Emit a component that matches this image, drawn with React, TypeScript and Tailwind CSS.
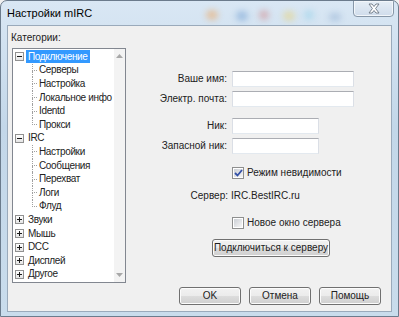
import React from "react";

type Node = { label: string; open?: boolean; selected?: boolean; children?: string[] };

const tree: Node[] = [
  { label: "Подключение", open: true, selected: true, children: ["Серверы", "Настройка", "Локальное инфо", "Identd", "Прокси"] },
  { label: "IRC", open: true, children: ["Настройки", "Сообщения", "Перехват", "Логи", "Флуд"] },
  { label: "Звуки" },
  { label: "Мышь" },
  { label: "DCC" },
  { label: "Дисплей" },
  { label: "Другое" },
];

const font = { fontFamily: '"Liberation Sans", Arial, sans-serif' };

function ExpandBox({ open }: { open?: boolean }) {
  return (
    <span className="w-[9px] h-[9px] border border-[#919191] bg-[linear-gradient(#ffffff,#e4e4e4)] flex items-center justify-center relative shrink-0">
      <span className="w-[5px] h-px bg-[#1a1a1a]" />
      {!open && <span className="absolute w-px h-[5px] bg-[#1a1a1a]" />}
    </span>
  );
}

function Connector({ last }: { last: boolean }) {
  return (
    <span className="flex flex-col w-[5px] h-full shrink-0">
      <span className="flex-1 border-l border-b border-dotted border-[#a0a0a0]" />
      <span className={"flex-1 border-dotted border-[#a0a0a0] " + (last ? "" : "border-l")} />
    </span>
  );
}

function Tree() {
  return (
    <div className="ml-[4px] mt-[5px] w-[114px] h-[235px] border border-[#828790] bg-white flex">
      <div className="flex-1 pt-px text-[10px] tracking-[-0.35px] text-[#222] leading-none">
        {tree.map((n) => (
          <div key={n.label}>
            <div className="h-[13.6px] flex items-center pl-[2px]">
              <ExpandBox open={n.open} />
              <span
                className={
                  "ml-[2px] px-[2px] h-[13px] flex items-center whitespace-nowrap " +
                  (n.selected ? "bg-[#3399ff] text-white" : "")
                }
              >
                {n.label}
              </span>
            </div>
            {n.open &&
              n.children?.map((c, i) => (
                <div key={c} className="h-[13.6px] flex items-center">
                  <span className="w-[19px] shrink-0" />
                  <Connector last={i === (n.children?.length ?? 0) - 1} />
                  <span className="px-[2px] whitespace-nowrap">{c}</span>
                </div>
              ))}
          </div>
        ))}
      </div>
      <div className="w-[16px] bg-[#f3f3f3] flex flex-col items-center justify-between py-[5px]">
        <svg width="7" height="4" viewBox="0 0 7 4">
          <path d="M0 4 L3.5 0 L7 4 Z" fill="#a8a8a8" />
        </svg>
        <svg width="7" height="4" viewBox="0 0 7 4">
          <path d="M0 0 L3.5 4 L7 0 Z" fill="#a8a8a8" />
        </svg>
      </div>
    </div>
  );
}

function Input({ w }: { w: string }) {
  return <div className={"h-[16px] bg-white border border-[#abadb3] border-b-[#e3e9ef] border-x-[#dbdfe6] " + w} />;
}

function Button({ children, w }: { children: React.ReactNode; w: string }) {
  return (
    <button
      className={
        "h-[18px] rounded-[3px] border border-[#707070] bg-[linear-gradient(#f2f2f2_0%,#ebebeb_50%,#dddddd_50%,#cfcfcf_100%)] shadow-[inset_0_0_0_1px_#fcfcfc] text-[10px] text-[#222] font-normal leading-none whitespace-nowrap flex items-center justify-center " +
        w
      }
    >
      {children}
    </button>
  );
}

function Checkbox({ checked }: { checked?: boolean }) {
  return (
    <span className="w-[12px] h-[12px] border border-[#8e8f8f] bg-white p-px shrink-0 flex">
      <span className="flex-1 bg-[linear-gradient(135deg,#cbcfd5,#f6f6f6)] flex items-center justify-center">
        {checked && (
          <svg width="9" height="8" viewBox="0 0 9 8">
            <path d="M1 4 L3.5 6.5 L8 1" fill="none" stroke="#3451a8" strokeWidth="1.8" />
          </svg>
        )}
      </span>
    </span>
  );
}

export default function App() {
  return (
    <div className="w-[399px] h-[317px] bg-[#f0f0f0]" style={font}>
      <div className="w-[399px] h-[317px] rounded-t-[7px] border border-[#6b7b8c] bg-[linear-gradient(#d9e7f4,#c3d7e9_40%,#c9dcec)] flex flex-col relative overflow-hidden">
        <div className="absolute left-[205px] top-[9px] w-[12px] h-[10px] rounded-full bg-[#f0a050] opacity-50 blur-[3px]" />
        <div className="absolute left-[235px] top-[10px] w-[12px] h-[10px] rounded-full bg-[#6a9ad0] opacity-50 blur-[3px]" />
        <div className="absolute left-[258px] top-[9px] w-[10px] h-[10px] rounded-full bg-[#d08080] opacity-50 blur-[3px]" />
        <div className="absolute left-[282px] top-[10px] w-[12px] h-[10px] rounded-full bg-[#e8d070] opacity-50 blur-[3px]" />
        <div className="absolute left-[303px] top-[9px] w-[10px] h-[10px] rounded-full bg-[#8fd0e8] opacity-50 blur-[3px]" />
        <div className="absolute left-[328px] top-[12px] w-[12px] h-[8px] rounded-full bg-[#7fa0c8] opacity-40 blur-[3px]" />

        <div className="h-[24px] flex items-start justify-between pl-[6px] pr-[4px] relative">
          <span className="mt-[7px] text-[11px] text-black leading-none" style={font}>
            Настройки mIRC
          </span>
          <div className="w-[41px] h-[17px] -mt-px rounded-b-[4px] border border-[#8797a8] bg-[linear-gradient(#e6eef6,#cfdceb)] shadow-[inset_0_0_0_1px_#f2f6fa] flex items-center justify-center">
            <svg width="12" height="11" viewBox="0 0 12 11">
              <path
                d="M1 1 H4 L6 3.5 L8 1 H11 L7.6 5.5 L11 10 H8 L6 7.5 L4 10 H1 L4.4 5.5 Z"
                fill="#ffffff"
                stroke="#6b7683"
                strokeWidth="0.9"
                strokeLinejoin="round"
              />
            </svg>
          </div>
        </div>

        <div className="mx-[6px] h-[287px] border border-[#9aaabb] bg-[#f0f0f0] flex text-[10px] text-[#222] leading-none relative">
          <div className="w-[117px] flex flex-col">
            <span className="pl-[3px] mt-[7px]">Категории:</span>
            <Tree />
          </div>

          <div className="flex-1 flex flex-col">
            <div className="mt-[45px] grid grid-cols-[102px_auto] gap-x-[5px] items-center">
              <span className="text-right">Ваше имя:</span>
              <Input w="w-[122px]" />
              <span className="text-right mt-[4px]">Электр. почта:</span>
              <div className="mt-[4px]"><Input w="w-[122px]" /></div>
              <span className="text-right mt-[11px]">Ник:</span>
              <div className="mt-[11px]"><Input w="w-[87px]" /></div>
              <span className="text-right mt-[4px]">Запасной ник:</span>
              <div className="mt-[4px]"><Input w="w-[87px]" /></div>
            </div>

            <div className="ml-[107px] mt-[13px] flex items-center gap-[3px]">
              <Checkbox checked />
              <span>Режим невидимости</span>
            </div>

            <div className="mt-[12px] grid grid-cols-[103px_auto] gap-x-[3px] items-center">
              <span className="text-right">Сервер:</span>
              <span>IRC.BestIRC.ru</span>
            </div>

            <div className="ml-[107px] mt-[16px] flex items-center gap-[3px]">
              <Checkbox />
              <span>Новое окно сервера</span>
            </div>

            <div className="ml-[87px] mt-[10px]">
              <Button w="w-[118px]">Подключиться к серверу</Button>
            </div>

            <div className="mt-auto mb-[6px] mr-[10px] flex justify-end gap-[8px]">
              <Button w="w-[62px]">OK</Button>
              <Button w="w-[62px]">Отмена</Button>
              <Button w="w-[62px]">Помощь</Button>
            </div>
          </div>
        </div>
      </div>
    </div>
  );
}
